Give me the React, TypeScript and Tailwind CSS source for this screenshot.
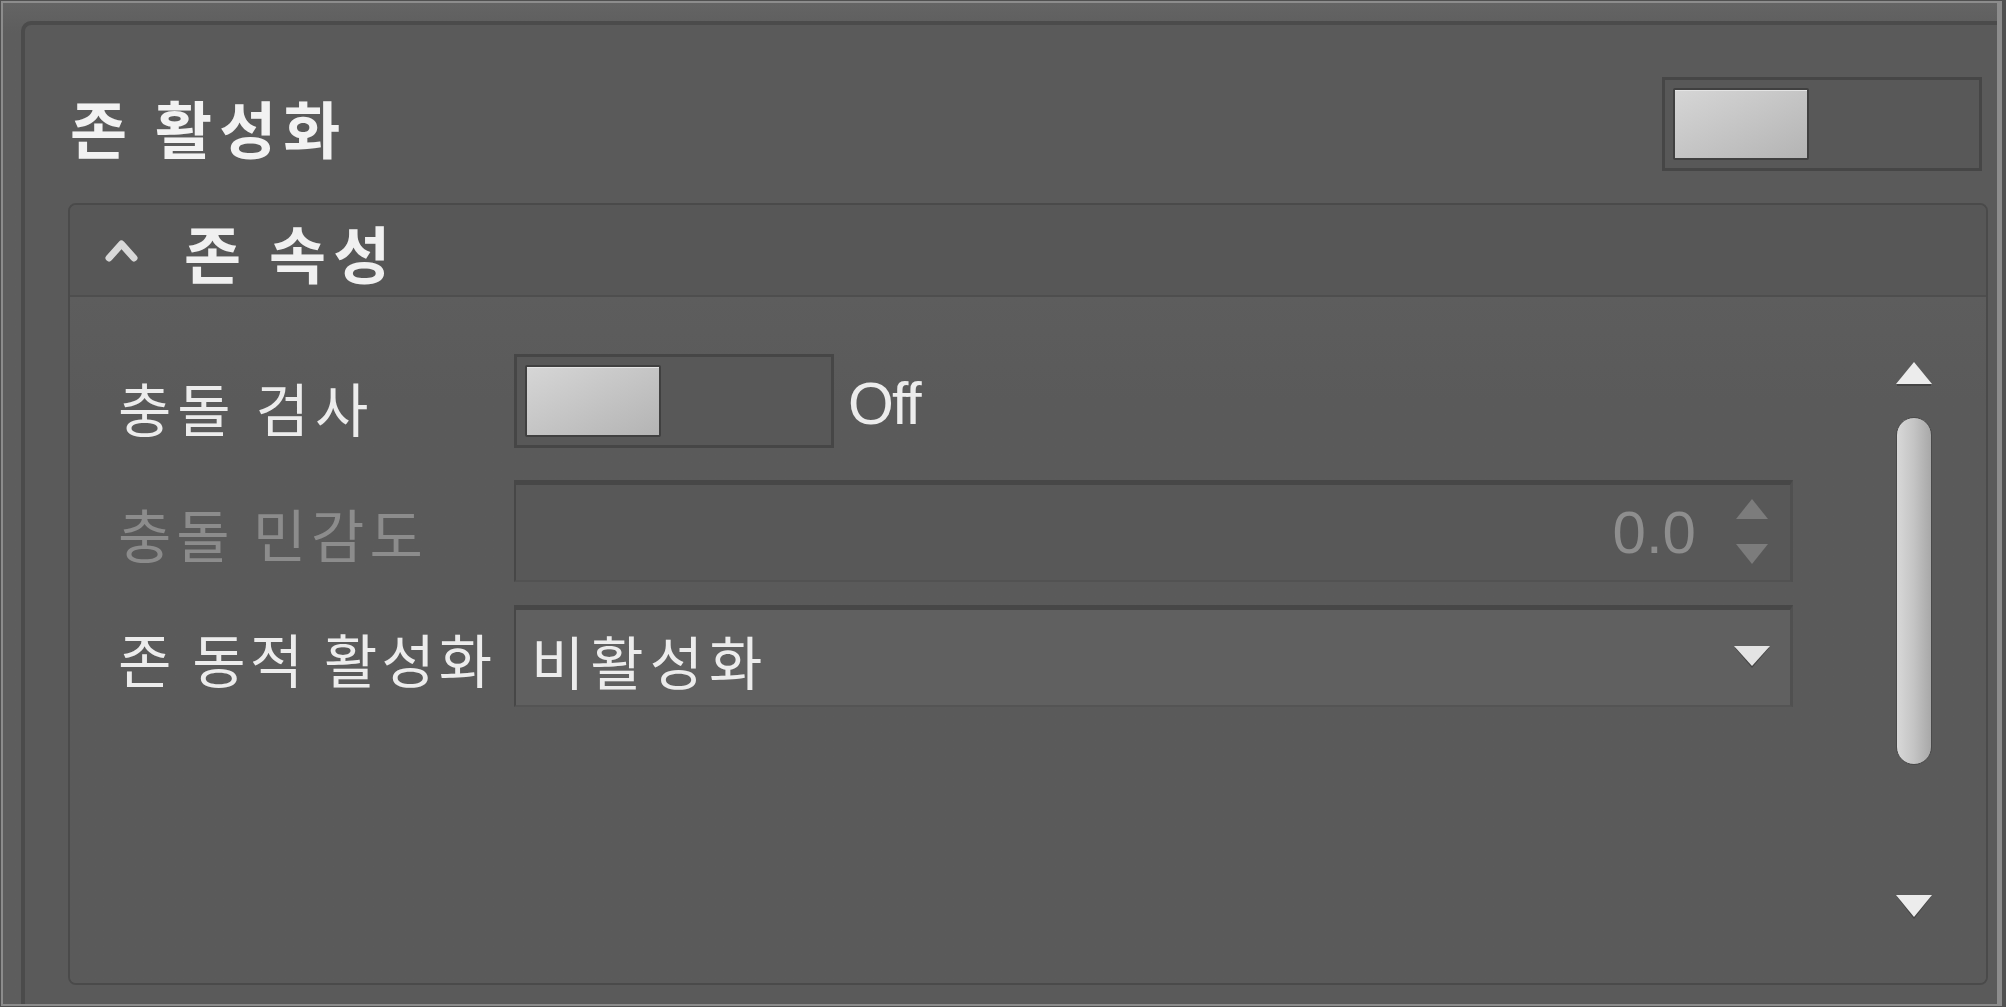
import React from "react";

const kr = "font-['Noto_Sans_CJK_KR','Noto_Sans',sans-serif]";
const latin = "font-['Liberation_Sans','Noto_Sans',sans-serif]";

const Toggle: React.FC = () => (
  <div className="w-[320px] h-[94px] shrink-0 border-[3px] border-[#464646] bg-[#585858] p-[8px]">
    <div className="w-[136px] h-[72px] rounded-[2px] border-2 border-[#404040] bg-linear-to-br from-[#d6d6d6] to-[#b4b4b4] shadow-[inset_0_1px_0_#e4e4e4]" />
  </div>
);

const ChevronUp = () => (
  <svg width="37" height="28" viewBox="0 0 37 28">
    <polyline
      points="6,22 18.5,8 31,22"
      fill="none"
      stroke="#d8d8d8"
      strokeWidth="7"
      strokeLinecap="round"
      strokeLinejoin="round"
    />
  </svg>
);

const Tri: React.FC<{ up?: boolean; color: string; shadow?: boolean; w?: number; h?: number }> = ({
  up,
  color,
  shadow,
  w = 34,
  h = 22,
}) => (
  <svg width={w} height={h + 3} viewBox={`0 0 ${w} ${h + 3}`}>
    {shadow &&
      (up ? (
        <rect x="1" y={h - 1} width={w - 2} height="3" fill="#3e3e3e" opacity="0.8" />
      ) : (
        <polygon points={`1,2 ${w - 1},2 ${w / 2},${h + 2}`} fill="#3e3e3e" opacity="0.8" />
      ))}
    {up ? (
      <polygon points={`0,${h} ${w / 2},0 ${w},${h}`} fill={color} />
    ) : (
      <polygon points={`0,0 ${w},0 ${w / 2},${h}`} fill={color} />
    )}
  </svg>
);

const App: React.FC = () => {
  return (
    <div className="w-[2006px] h-[1007px] overflow-hidden bg-[#505050] pl-px pt-px pb-px pr-[4px]">
      <div className="h-full overflow-hidden border-2 border-r-[5px] border-[#8c8c8c] bg-linear-to-b from-[#646464] to-[#5d5d5d] to-[3%] pl-[18px] pt-[18px]">
        <div className="h-[1100px] border-l-[4px] border-t-[4px] border-[#4b4b4b] rounded-tl-[10px] bg-[#5a5a5a] pl-[43px] pr-[9px] pt-[52px]">
          {/* top row */}
          <div className="h-[94px] flex items-center justify-between pl-[2px] pr-[6px]">
            <span className={`${kr} text-[62px] font-bold leading-none text-[#f2f2f2] tracking-[7px] pt-[6px]`}>
              존 활성화
            </span>
            <Toggle />
          </div>

          {/* group */}
          <div className="mt-[32px] h-[782px] rounded-[8px] border-2 border-[#4a4a4a] overflow-hidden flex flex-col">
            <div className="h-[92px] shrink-0 flex items-center gap-[44px] pl-[33px] border-b-2 border-[#4e4e4e] bg-[#575757]">
              <ChevronUp />
              <span className={`${kr} text-[62px] font-bold leading-none text-[#f0f0f0] tracking-[7px] pt-[4px]`}>존 속성</span>
            </div>

            <div className="flex flex-1 bg-linear-to-b from-[#5d5d5d] to-[#5a5a5a] to-[15%]">
              <div className="w-[1723px] pl-[48px] pt-[57px] flex flex-col">
                {/* row 1 */}
                <div className="h-[94px] flex items-center">
                  <span className={`${kr} w-[396px] shrink-0 text-[58px] leading-none text-[#ececec] tracking-[6px] pt-[12px]`}>
                    충돌 검사
                  </span>
                  <Toggle />
                  <span className={`${latin} ml-[14px] text-[59px] leading-none text-[#ececec] tracking-[-2px] pt-[6px]`}>
                    Off
                  </span>
                </div>

                {/* row 2 */}
                <div className="mt-[32px] h-[102px] flex items-center">
                  <span className={`${kr} w-[396px] shrink-0 text-[58px] leading-none text-[#8c8c8c] tracking-[5px] pt-[4px] whitespace-nowrap`}>
                    충돌 민감도
                  </span>
                  <div className="flex-1 h-full flex items-center justify-end border-t-[5px] border-l-2 border-[#474747] border-r-[3px] border-r-[#505050] border-b-2 border-b-[#525252] bg-[#585858] pr-[22px]">
                    <span className={`${latin} text-[60px] leading-none text-[#8e8e8e] mr-[40px]`}>0.0</span>
                    <div className="flex flex-col gap-[22px]">
                      <Tri up color="#7c7c7c" w={32} h={20} />
                      <Tri color="#7c7c7c" w={32} h={20} />
                    </div>
                  </div>
                </div>

                {/* row 3 */}
                <div className="mt-[23px] h-[102px] flex items-center">
                  <span className={`${kr} w-[396px] shrink-0 text-[58px] leading-none text-[#ececec] tracking-[4px] pt-[4px] whitespace-nowrap`}>
                    존 동적 활성화
                  </span>
                  <div className="flex-1 h-full flex items-center justify-between border-t-[5px] border-l-2 border-[#474747] border-r-[3px] border-r-[#505050] border-b-2 border-b-[#545454] bg-[#606060] pl-[15px] pr-[20px]">
                    <span className={`${kr} text-[58px] leading-none text-[#ececec] tracking-[6px] pt-[4px]`}>비활성화</span>
                    <Tri color="#e4e4e4" shadow w={36} h={20} />
                  </div>
                </div>
              </div>

              {/* scrollbar */}
              <div className="ml-[102px] w-[37px] pt-[65px] flex flex-col items-center">
                <Tri up color="#ececec" shadow w={36} h={22} />
                <div className="mt-[30px] w-[36px] h-[348px] rounded-full border border-[#4a4a4a] bg-linear-to-r from-[#d8d8d8] via-[#c4c4c4] to-[#a8a8a8]" />
                <div className="mt-[130px]">
                  <Tri color="#ececec" shadow w={36} h={22} />
                </div>
              </div>
            </div>
          </div>
        </div>
      </div>
    </div>
  );
};

export default App;
